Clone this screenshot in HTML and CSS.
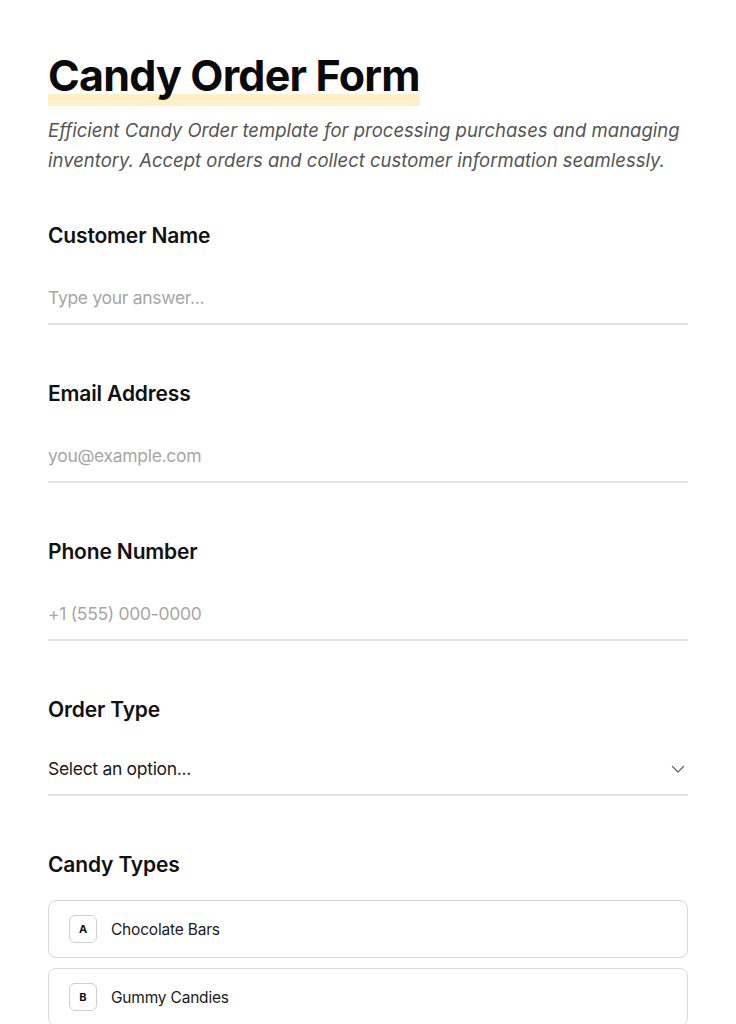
FILE: index.html
```html
<!DOCTYPE html>
<html lang="en">
<head>
<meta charset="utf-8">
<title>Candy Order Form</title>
<link rel="stylesheet" href="styles.css">
</head>
<body>
<main class="form">
  <header class="head">
    <h1 class="title"><span class="mark">Candy Order Form</span></h1>
    <p class="desc">Efficient Candy Order template for processing purchases and managing inventory. Accept orders and collect customer information seamlessly.</p>
  </header>

  <section class="field">
    <label class="label">Customer Name</label>
    <div class="input placeholder">Type your answer...</div>
  </section>

  <section class="field">
    <label class="label">Email Address</label>
    <div class="input placeholder">you@example.com</div>
  </section>

  <section class="field">
    <label class="label">Phone Number</label>
    <div class="input placeholder">+1 (555) 000-0000</div>
  </section>

  <section class="field">
    <label class="label">Order Type</label>
    <div class="input select">
      <span>Select an option...</span>
      <svg class="chev" width="14" height="14" viewBox="0 0 14 14" aria-hidden="true"><path d="M1.5 4.5 L7 10 L12.5 4.5" fill="none" stroke="#666" stroke-width="1.3" stroke-linecap="round" stroke-linejoin="round"/></svg>
    </div>
  </section>

  <section class="field">
    <label class="label label-choices">Candy Types</label>
    <div class="choices">
      <div class="choice"><span class="key">A</span><span class="ctext">Chocolate Bars</span></div>
      <div class="choice"><span class="key">B</span><span class="ctext">Gummy Candies</span></div>
    </div>
  </section>
</main>
</body>
</html>
```

FILE: styles.css
```css
html, body {
  margin: 0;
  padding: 0;
  background: #ffffff;
}

body {
  font-family: "Inter", "Noto Sans", sans-serif;
  color: #111111;
}

.form {
  width: 640px;
  padding: 49px 48px 40px;
}

.head {
  margin-bottom: 47px;
}

.title {
  margin: 0;
  font-size: 43px;
  line-height: 52px;
  font-weight: 700;
  letter-spacing: -0.8px;
  color: #0a0a0a;
}

.mark {
  background: linear-gradient(to bottom, transparent 79%, #fdf0c6 79%, #fdf0c6 100%);
  padding-bottom: 5px;
}

.desc {
  margin: 14px 0 0;
  font-size: 18.5px;
  line-height: 30px;
  font-style: italic;
  color: #555555;
  letter-spacing: 0;
}

.field {
  display: flex;
  flex-direction: column;
  margin-bottom: 55px;
}

.label {
  font-size: 21px;
  line-height: 28px;
  font-weight: 600;
  letter-spacing: -0.15px;
  color: #111111;
  margin-bottom: 23px;
}

.input {
  font-size: 17.5px;
  line-height: 26px;
  padding: 12px 0;
  border-bottom: 2px solid #e2e2e2;
  letter-spacing: -0.3px;
}

.placeholder {
  color: #a6a6a6;
}

.select {
  display: flex;
  align-items: center;
  justify-content: space-between;
  color: #1a1a1a;
  margin-top: -3px;
}

.chev {
  margin-right: 3px;
}

.label-choices {
  margin-bottom: 21px;
}

.choices {
  display: flex;
  flex-direction: column;
  gap: 10px;
}

.choice {
  display: flex;
  align-items: center;
  height: 56px;
  padding: 0 20px;
  border: 1px solid #d9d9d9;
  border-radius: 8px;
}

.key {
  display: flex;
  align-items: center;
  justify-content: center;
  width: 26px;
  height: 26px;
  border: 1px solid #cfcfcf;
  border-radius: 6px;
  font-size: 11px;
  font-weight: 700;
  color: #111111;
  margin-right: 14px;
}

.ctext {
  font-size: 15.5px;
  color: #1a1a1a;
  letter-spacing: -0.2px;
}
```
